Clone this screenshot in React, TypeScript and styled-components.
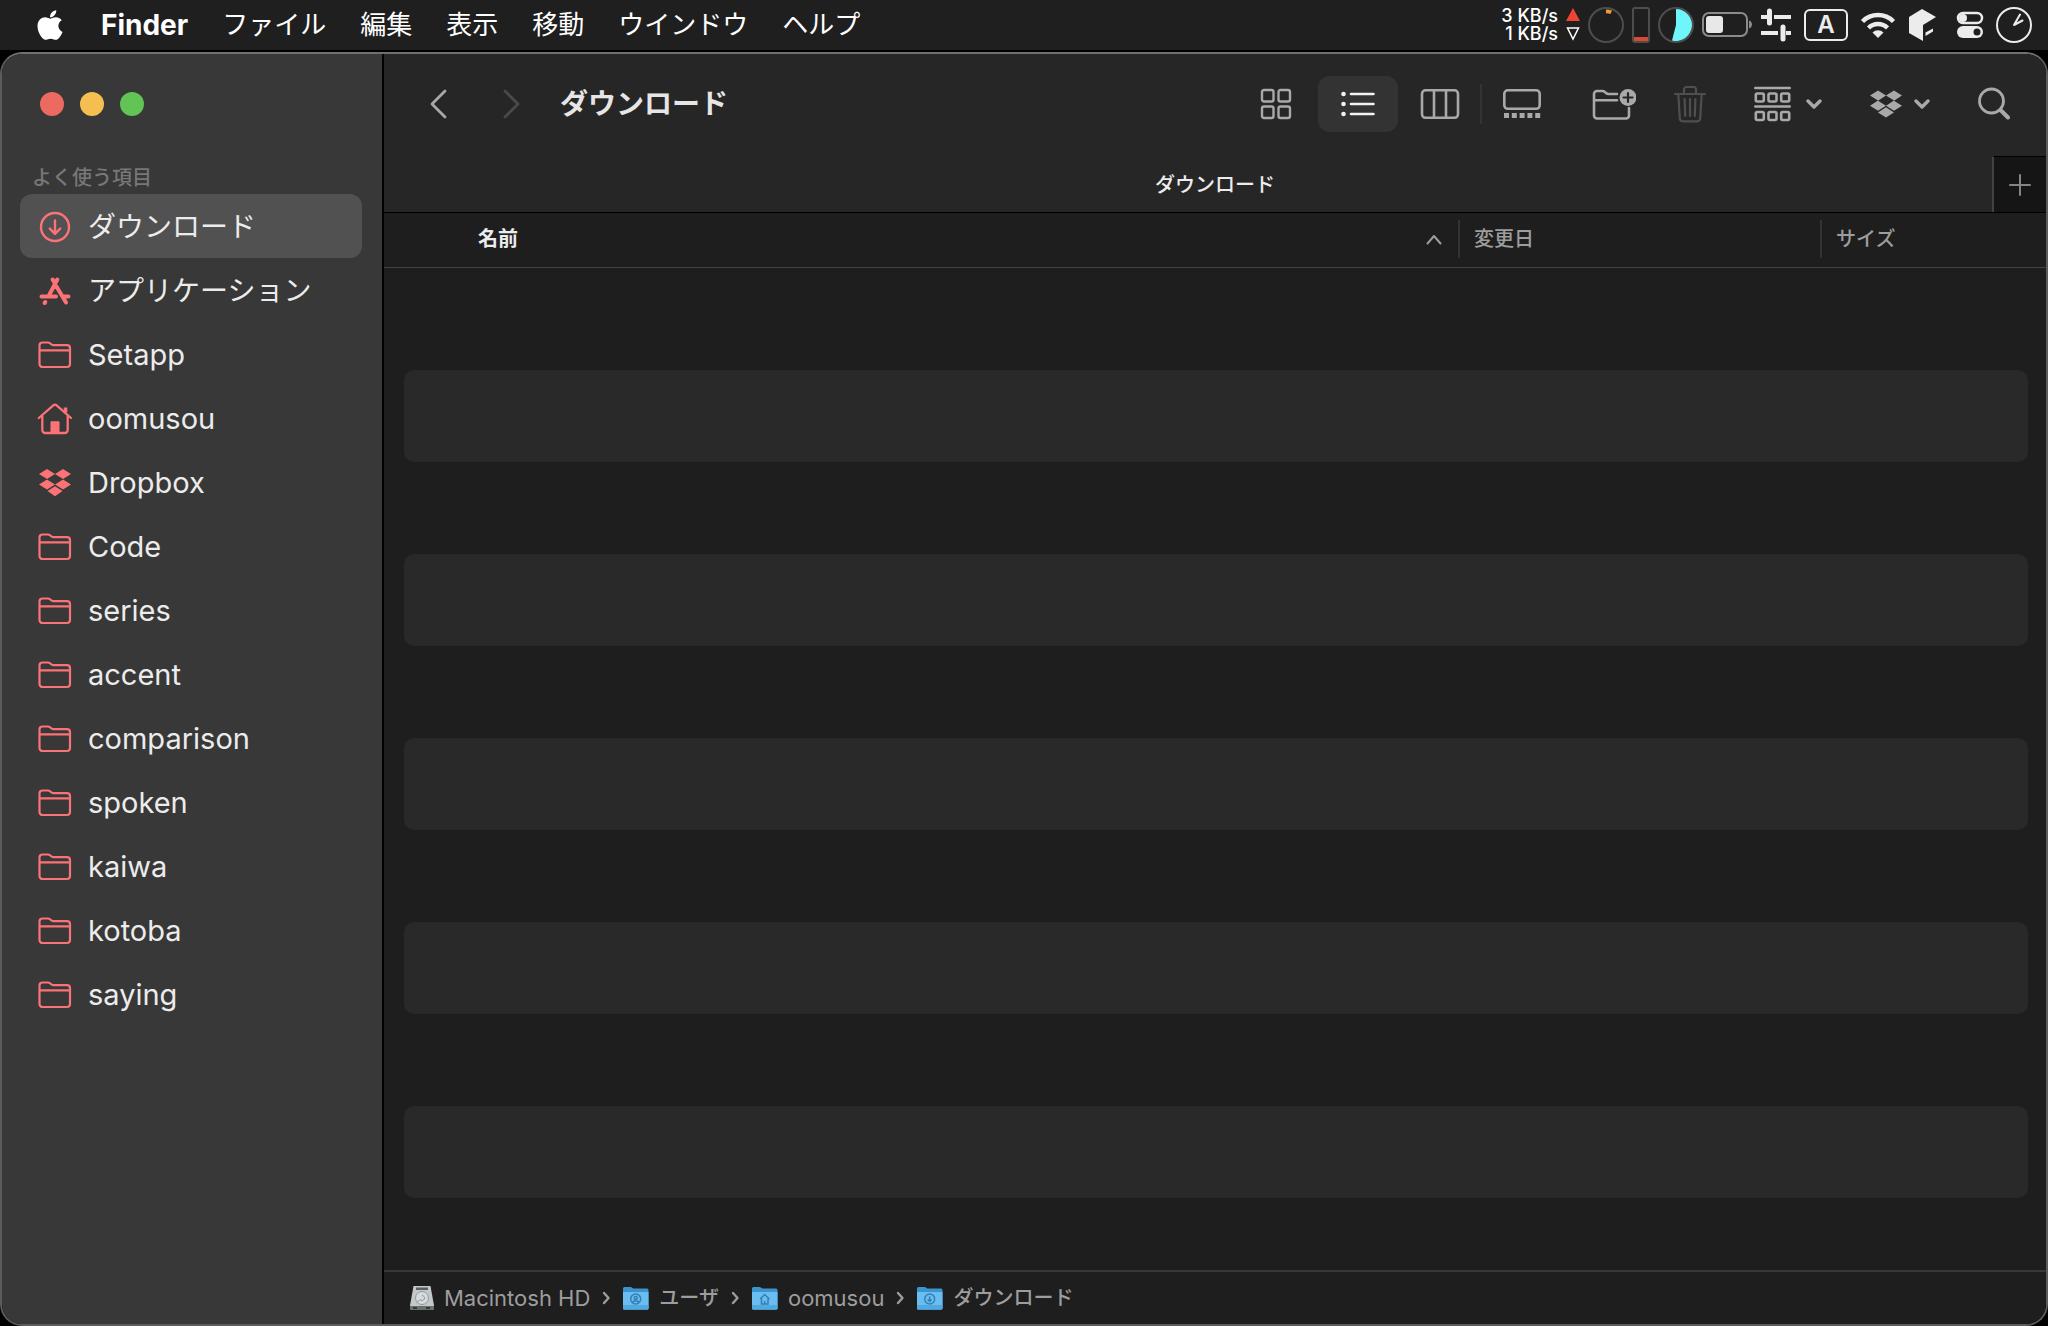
import React from 'react';
import styled, { createGlobalStyle } from 'styled-components';
import { FaApple, FaDropbox } from 'react-icons/fa';

const colors = {
  accent: '#fb7377',
  text: '#ececec',
  glyph: '#a9a9a9',
  dim: '#4a4a4a',
  muted: '#9d9d9d',
  sidebar: '#383838',
  chrome: '#262626',
  list: '#1e1e1e',
  stripe: '#292929',
  rule: '#424242',
};

const GlobalStyle = createGlobalStyle`
  *, *::before, *::after { box-sizing: border-box; }
  body {
    margin: 0;
    background: #000;
    color: ${colors.text};
    font-family: Inter, "Noto Sans CJK JP", sans-serif;
    overflow: hidden;
  }
  button {
    border: 0;
    padding: 0;
    background: none;
    color: inherit;
    font: inherit;
  }
  svg { display: block; flex: none; }
`;

const Desktop = styled.div`
  display: flex;
  flex-direction: column;
  gap: 2px;
  height: 100vh;
`;

const MenuBar = styled.header`
  display: flex;
  align-items: center;
  justify-content: space-between;
  flex: none;
  height: 50px;
  padding: 0 16px 0 33px;
  background: #1f1f1f;
  color: #fff;
`;

const Menus = styled.nav`
  display: flex;
  align-items: center;
  gap: 34px;
`;

const MenuButton = styled.button<{ $bold?: boolean }>`
  font-size: ${(p) => (p.$bold ? 28 : 26)}px;
  line-height: 36px;
  font-weight: ${(p) => (p.$bold ? 700 : 400)};
  white-space: nowrap;
`;

const Status = styled.div<{ $gap: number }>`
  display: flex;
  align-items: center;
  gap: ${(p) => p.$gap}px;
  color: ${colors.text};
`;

const NetSpeed = styled.div`
  font-size: 18px;
  line-height: 18px;
  font-weight: 500;
  text-align: right;
  white-space: nowrap;
  color: #fff;
`;

const InputSource = styled.button`
  width: 44px;
  height: 32px;
  border: 2px solid ${colors.text};
  border-radius: 6px;
  font-size: 24px;
  line-height: 28px;
  font-weight: 600;
  text-align: center;
`;

const Window = styled.main`
  display: flex;
  flex: 1;
  min-height: 0;
  border: 2px solid #5c5c5c;
  border-top-color: #707070;
  border-radius: 22px;
  overflow: hidden;
`;

const Sidebar = styled.aside`
  flex: none;
  width: 382px;
  padding: 38px 20px 0 18px;
  border-right: 2px solid #000;
  background: ${colors.sidebar};
`;

const Lights = styled.div`
  display: flex;
  gap: 16px;
  padding-left: 20px;
`;

const Light = styled.button<{ $color: string }>`
  width: 24px;
  height: 24px;
  border-radius: 50%;
  background: ${(p) => p.$color};
`;

const SectionTitle = styled.h2`
  margin: 48px 0 2px;
  padding-left: 12px;
  color: #777;
  font-size: 20px;
  line-height: 28px;
  font-weight: 500;
`;

const Places = styled.ul`
  margin: 0;
  padding: 0;
  list-style: none;
`;

const Place = styled.a<{ $active?: boolean; $latin?: boolean }>`
  display: flex;
  align-items: center;
  gap: 14px;
  height: 64px;
  padding: 2px 0 0 16px;
  border-radius: 12px;
  background: ${(p) => (p.$active ? '#515151' : 'transparent')};
  color: ${colors.text};
  font-size: ${(p) => (p.$latin ? 29 : 28)}px;
  line-height: 40px;
  text-decoration: none;
  svg { color: ${colors.accent}; }
`;

const Pane = styled.section`
  display: flex;
  flex-direction: column;
  flex: 1;
  min-width: 0;
  background: ${colors.list};
`;

const Toolbar = styled.div`
  display: flex;
  align-items: center;
  flex: none;
  height: 102px;
  padding: 0 24px 2px 30px;
  background: ${colors.chrome};
  color: ${colors.glyph};
`;

const History = styled.div`
  display: flex;
  gap: 26px;
`;

const NavButton = styled.button`
  display: grid;
  place-items: center;
  width: 48px;
  height: 56px;
  &:disabled { color: ${colors.dim}; }
`;

const Title = styled.h1`
  flex: 1;
  margin: 0;
  padding-left: 24px;
  color: #e6e6e6;
  font-size: 28px;
  line-height: 40px;
  font-weight: 700;
`;

const Views = styled.div`
  display: flex;
  align-items: center;
  gap: 2px;
  margin-right: 18px;
`;

const ViewButton = styled.button<{ $active?: boolean }>`
  display: grid;
  place-items: center;
  width: 80px;
  height: 56px;
  border-radius: 12px;
  background: ${(p) => (p.$active ? '#333' : 'transparent')};
  color: ${(p) => (p.$active ? '#f2f2f2' : 'inherit')};
`;

const Divider = styled.span`
  width: 2px;
  height: 40px;
  margin: 0 -2px;
  background: #333;
`;

const Actions = styled.div<{ $gap: number }>`
  display: flex;
  align-items: center;
  gap: ${(p) => p.$gap}px;
`;

const ToolButton = styled.button`
  display: flex;
  align-items: center;
  gap: 12px;
  height: 56px;
  padding: 0 12px;
  &:disabled { color: #4f4f4f; }
`;

const Tabs = styled.div`
  display: grid;
  grid-template-columns: 54px 1fr 54px;
  flex: none;
  height: 56px;
  background: ${colors.chrome};
`;

const Tab = styled.button`
  grid-column: 2;
  padding-top: 2px;
  font-size: 20px;
  line-height: 28px;
  font-weight: 500;
`;

const NewTab = styled.button`
  display: grid;
  place-items: center;
  border-top: 1px solid #000;
  border-left: 2px solid ${colors.rule};
  background: #151515;
  color: #858585;
`;

const FileTable = styled.table`
  display: flex;
  flex-direction: column;
  flex: 1;
  min-height: 0;
  overflow: hidden;
`;

const TableHead = styled.thead`
  display: block;
  flex: none;
  border-top: 1px solid #000;
  border-bottom: 1px solid ${colors.rule};
`;

const HeadRow = styled.tr`
  display: grid;
  grid-template-columns: 1fr 362px 226px;
  align-items: center;
  height: 54px;
  padding-bottom: 2px;
`;

const HeadCell = styled.th<{ $primary?: boolean }>`
  display: flex;
  align-items: center;
  justify-content: space-between;
  height: 38px;
  padding: ${(p) => (p.$primary ? '0 16px 0 94px' : '0 0 0 14px')};
  border-left: ${(p) => (p.$primary ? '0' : `2px solid #333`)};
  color: ${(p) => (p.$primary ? colors.text : colors.muted)};
  font-size: 20px;
  line-height: 28px;
  font-weight: ${(p) => (p.$primary ? 700 : 500)};
  svg { color: ${colors.muted}; }
`;

const TableBody = styled.tbody`
  display: block;
  padding: 10px 18px 0 20px;
`;

const FileRow = styled.tr`
  display: block;
  height: 92px;
  border-radius: 10px;
  &:nth-child(even) { background: ${colors.stripe}; }
`;

const PathBar = styled.nav`
  display: flex;
  align-items: center;
  flex: none;
  gap: 12px;
  height: 54px;
  padding-left: 26px;
  border-top: 2px solid #383838;
  color: ${colors.muted};
`;

const Crumb = styled.a<{ $latin?: boolean }>`
  display: flex;
  align-items: center;
  gap: 10px;
  color: inherit;
  font-size: ${(p) => (p.$latin ? 22 : 20)}px;
  line-height: 28px;
  font-weight: ${(p) => (p.$latin ? 400 : 500)};
  text-decoration: none;
`;

const isLatin = (name: string) => /^[\x20-\x7e]+$/.test(name);

const stroke = (width: number) => ({
  fill: 'none',
  stroke: 'currentColor',
  strokeWidth: width,
  strokeLinecap: 'round' as const,
  strokeLinejoin: 'round' as const,
});

const DownloadIcon = () => (
  <svg width="38" height="38" viewBox="0 0 38 38" {...stroke(2.4)}>
    <circle cx="19" cy="19" r="14" />
    <path d="M19 12.5v13M13.8 20.6l5.2 5.2 5.2-5.2" />
  </svg>
);

const AppsIcon = () => (
  <svg width="38" height="38" viewBox="0 0 38 38" {...stroke(4)}>
    <path d="M21.3 7.500L13.200 23M5.500 24.500H20M16.600 7.500l1.500 2.500M20.500 14.500l9.500 16M27.500 24.500h5M9.300 30l-.7 1" />
  </svg>
);

const FolderIcon = () => (
  <svg width="38" height="38" viewBox="0 0 38 38" {...stroke(2.2)}>
    <path d="M3.500 28V9.500a3 3 0 0 1 3-3h5.400c1.200 0 1.700.3 2.500 1l1 .8c.7.600 1.300.800 2.300.800H31a3 3 0 0 1 3 3V28a3 3 0 0 1-3 3H6.500a3 3 0 0 1-3-3zM3.500 14.300H34" />
  </svg>
);

const HomeIcon = () => (
  <svg width="38" height="38" viewBox="0 0 38 38" {...stroke(2.3)}>
    <path d="M2.800 18L17.300 5.300a2.500 2.500 0 0 1 3.300 0L35 18M6.300 16v14a3 3 0 0 0 3 3h19.400a3 3 0 0 0 3-3V16" />
    <path d="M29.500 7.500v5" strokeWidth="3.600" strokeLinecap="butt" />
    <path d="M14.500 33V22.300a1 1 0 0 1 1-1h7a1 1 0 0 1 1 1V33z" fill="currentColor" stroke="none" />
  </svg>
);

const DropboxIcon = () => (
  <svg width="38" height="38" viewBox="0 0 38 38" fill="currentColor">
    <path d="M11 5l8 5-8 5-8-5zM27 5l8 5-8 5-8-5zM11 15.600l8 5-8 5-8-5zM27 15.600l8 5-8 5-8-5zM11.500 27l7.500-4.700 7.500 4.700-7.500 5.200z" />
  </svg>
);

const Chevron = () => (
  <svg width="16" height="10" viewBox="0 0 16 10" {...stroke(3.4)}>
    <path d="M2 2l6 6 6-6" />
  </svg>
);

const PathArrow = () => (
  <svg width="9" height="14" viewBox="0 0 9 14" {...stroke(2.4)}>
    <path d="M2 2l4.500 5-4.500 5" />
  </svg>
);

const DiskIcon = () => (
  <svg width="24" height="26" viewBox="0 0 24 26">
    <path d="M3.500 1h17l3.500 19.500v2.500a2 2 0 0 1-2 2H2a2 2 0 0 1-2-2v-2.500z" fill="#c3c9c9" />
    <path d="M0 21h24v2a2 2 0 0 1-2 2H2a2 2 0 0 1-2-2z" fill="#66706c" />
    <path d="M6 2.500h12v2.500H6z" fill="#5a6063" />
    <circle cx="12" cy="13" r="6.500" fill="#d6dcdd" stroke="#929a9c" />
    <path d="M12 10.500a2.500 2.500 0 1 1-2 4l-3 3" fill="none" stroke="#8d9597" />
    <path d="M3 23h4M16 23h4" stroke="#313b37" strokeWidth="2" />
  </svg>
);

const BlueFolder = ({ kind }: { kind: 'users' | 'home' | 'downloads' }) => (
  <svg width="26" height="26" viewBox="0 0 26 26">
    <path d="M0 3.500A1.500 1.500 0 0 1 1.500 2h6c1.500 0 1.800 1.500 3.300 1.500H24a1.500 1.500 0 0 1 1.500 1.500v18A1.500 1.500 0 0 1 24 24.500H1.500A1.500 1.500 0 0 1 0 23z" fill="#3c94cf" />
    <path d="M0 7h25.500v16A1.500 1.500 0 0 1 24 24.500H1.500A1.500 1.500 0 0 1 0 23z" fill="#69bdf0" />
    <path d="M0 20h25.500v3A1.500 1.500 0 0 1 24 24.500H1.500A1.500 1.500 0 0 1 0 23z" fill="#51a9e2" />
    <g fill="none" stroke="#3480b3" strokeWidth="1.500">
      {kind === 'users' && <path d="M12.700 9a5 5 0 1 1 0 10 5 5 0 0 1 0-10zM12.700 11.500a1.500 1.500 0 1 1 0 3 1.500 1.500 0 0 1 0-3zM9.700 18c.5-3 5.500-3 6 0" />}
      {kind === 'home' && <path d="M8 14l4.700-4.500 4.700 4.500M9.500 13.500V19h6.500v-5.500M12.700 19v-3" />}
      {kind === 'downloads' && <path d="M12.700 9a5 5 0 1 1 0 10 5 5 0 0 1 0-10zM12.700 11.500v5M10.700 14.500l2 2 2-2" />}
    </g>
  </svg>
);

const places = [
  { name: 'ダウンロード', Icon: DownloadIcon },
  { name: 'アプリケーション', Icon: AppsIcon },
  { name: 'Setapp', Icon: FolderIcon },
  { name: 'oomusou', Icon: HomeIcon },
  { name: 'Dropbox', Icon: DropboxIcon },
  ...['Code', 'series', 'accent', 'comparison', 'spoken', 'kaiwa', 'kotoba', 'saying'].map((name) => ({
    name,
    Icon: FolderIcon,
  })),
];

const crumbs = [
  { name: 'Macintosh HD', icon: <DiskIcon /> },
  { name: 'ユーザ', icon: <BlueFolder kind="users" /> },
  { name: 'oomusou', icon: <BlueFolder kind="home" /> },
  { name: 'ダウンロード', icon: <BlueFolder kind="downloads" /> },
];

const StatusIcons = () => (
  <Status $gap={12}>
    <Status $gap={8}>
      <NetSpeed>
        <div>3 KB/s</div>
        <div>1 KB/s</div>
      </NetSpeed>
      <svg width="14" height="36" viewBox="0 0 14 36">
        <path d="M7 1l7 13H0z" fill="#ee4433" />
        <path d="M1.500 21h11L7 32z" fill="none" stroke="#fff" strokeWidth="1.500" />
      </svg>
      <svg width="36" height="36" viewBox="0 0 36 36">
        <circle cx="18" cy="18" r="17" fill="none" stroke="#4d4d4d" strokeWidth="2" />
        <path d="M18 2.500q3 0 6 1l-1.500 3.500q-2-.7-4.500-.7z" fill="#eb9a3e" />
      </svg>
      <svg width="18" height="36" viewBox="0 0 18 36">
        <rect x="1" y="1" width="16" height="34" rx="2" fill="none" stroke="#4d4d4d" strokeWidth="2" />
        <path d="M2 30h14v4H2z" fill="#d84a33" />
      </svg>
      <svg width="36" height="36" viewBox="0 0 36 36">
        <circle cx="18" cy="18" r="17" fill="none" stroke="#4d4d4d" strokeWidth="2" />
        <path d="M18 2a16 16 0 1 1-4 31.500L18 18z" fill="#6ff6fb" />
      </svg>
      <svg width="50" height="26" viewBox="0 0 50 26">
        <rect x="1" y="1" width="44" height="23" rx="6" fill="none" stroke="#8b8b8b" strokeWidth="2" />
        <path d="M47 8.500c4 1 4 7 0 8z" fill="#8b8b8b" />
        <rect x="4" y="4" width="17" height="17" rx="3" fill="#e8e8e8" />
      </svg>
      <svg width="32" height="36" viewBox="0 0 32 36" {...stroke(4)}>
        <path d="M1 10h8M14 10h17M1 26h17M26 26h5" strokeLinecap="butt" />
        <path d="M9.500 4v12M23 20v12" strokeWidth="5" />
      </svg>
    </Status>
    <InputSource aria-label="入力ソース">A</InputSource>
    <svg width="36" height="28" viewBox="0 0 36 28" fill="none" stroke="currentColor" strokeWidth="4.500">
      <path d="M2.500 10.500a22 22 0 0 1 31 0M8.500 17a13.500 13.500 0 0 1 19 0" />
      <path d="M18 27l-5.500-5.500a8 8 0 0 1 11 0z" fill="currentColor" stroke="none" />
    </svg>
    <svg width="36" height="34" viewBox="0 0 36 34" fill="currentColor">
      <path d="M14 1l14 8-13 8v16L1 25V9zM17.500 24.500l7.500-4v3l-7.500 4.500z" />
    </svg>
    <svg width="28" height="28" viewBox="0 0 28 28">
      <rect x="2" y="2" width="24" height="10" rx="5" fill="none" stroke="currentColor" strokeWidth="2.500" />
      <circle cx="7" cy="7" r="4" fill="currentColor" />
      <rect x="1" y="15" width="26" height="12" rx="6" fill="currentColor" />
      <circle cx="21" cy="21" r="3.500" fill="#1f1f1f" />
    </svg>
    <svg width="36" height="36" viewBox="0 0 36 36" {...stroke(2)}>
      <circle cx="18" cy="18" r="17" />
      <path d="M24 7.500L18 18l8.500-4.500" />
    </svg>
  </Status>
);

export default function App() {
  return (
    <>
      <GlobalStyle />
      <Desktop>
        <MenuBar>
          <Menus>
            <MenuButton aria-label="アップル">
              <FaApple size={34} />
            </MenuButton>
            <MenuButton $bold>Finder</MenuButton>
            {['ファイル', '編集', '表示', '移動', 'ウインドウ', 'ヘルプ'].map((name) => (
              <MenuButton key={name}>{name}</MenuButton>
            ))}
          </Menus>
          <StatusIcons />
        </MenuBar>
        <Window>
          <Sidebar>
            <Lights>
              <Light $color="#ec6a5f" aria-label="閉じる" />
              <Light $color="#f4bf50" aria-label="しまう" />
              <Light $color="#61c455" aria-label="拡大" />
            </Lights>
            <SectionTitle>よく使う項目</SectionTitle>
            <Places>
              {places.map(({ name, Icon }, i) => (
                <li key={name}>
                  <Place href="#" $active={i === 0} $latin={isLatin(name)}>
                    <Icon />
                    {name}
                  </Place>
                </li>
              ))}
            </Places>
          </Sidebar>
          <Pane>
            <Toolbar>
              <History>
                <NavButton aria-label="戻る">
                  <svg width="18" height="30" viewBox="0 0 18 30" {...stroke(2.8)}>
                    <path d="M16 2L3 15l13 13" />
                  </svg>
                </NavButton>
                <NavButton aria-label="進む" disabled>
                  <svg width="18" height="30" viewBox="0 0 18 30" {...stroke(2.8)}>
                    <path d="M2 2l13 13L2 28" />
                  </svg>
                </NavButton>
              </History>
              <Title>ダウンロード</Title>
              <Views>
                <ViewButton aria-label="アイコン">
                  <svg width="32" height="32" viewBox="0 0 32 32" {...stroke(2.4)}>
                    <rect x="2" y="2" width="11.500" height="11.500" rx="2" />
                    <rect x="18.500" y="2" width="11.500" height="11.500" rx="2" />
                    <rect x="2" y="18.500" width="11.500" height="11.500" rx="2" />
                    <rect x="18.500" y="18.500" width="11.500" height="11.500" rx="2" />
                  </svg>
                </ViewButton>
                <ViewButton aria-label="リスト" $active>
                  <svg width="34" height="26" viewBox="0 0 34 26" {...stroke(2.6)}>
                    <path d="M10 3h22.500M10 13h22.500M10 23h22.500" />
                    <path d="M2.500 3h.01M2.500 13h.01M2.500 23h.01" strokeWidth="4.600" />
                  </svg>
                </ViewButton>
                <ViewButton aria-label="カラム">
                  <svg width="40" height="32" viewBox="0 0 40 32" {...stroke(2.6)}>
                    <rect x="2" y="2.300" width="36" height="27.500" rx="3.500" />
                    <path d="M14 3v26M26 3v26" />
                  </svg>
                </ViewButton>
                <Divider />
                <ViewButton aria-label="ギャラリー">
                  <svg width="40" height="32" viewBox="0 0 40 32" {...stroke(2.6)}>
                    <rect x="2.300" y="2.300" width="35.400" height="18.500" rx="3.500" />
                    <path d="M2 27.500h37" strokeWidth="5" strokeLinecap="butt" strokeDasharray="5 2.800" />
                  </svg>
                </ViewButton>
              </Views>
              <Actions $gap={24}>
                <Actions $gap={14}>
                  <ToolButton aria-label="新規フォルダ">
                    <svg width="44" height="34" viewBox="0 0 44 34" {...stroke(2.6)}>
                      <path d="M25 7h-8.500c-1.200 0-1.700-.3-2.500-1l-1-.9C12.200 4.300 11.500 4 10.500 4H5a3 3 0 0 0-3 3v21.500a3 3 0 0 0 3 3h29a3 3 0 0 0 3-3V21M2 13.200h23" />
                      <circle cx="36" cy="10.500" r="8.500" fill="currentColor" stroke="none" />
                      <path d="M36 6v9M31.500 10.500h9" stroke={colors.chrome} strokeWidth="2.200" />
                    </svg>
                  </ToolButton>
                  <ToolButton aria-label="ゴミ箱に入れる" disabled>
                    <svg width="32" height="38" viewBox="0 0 32 38" {...stroke(2.2)}>
                      <path d="M1 9h30M10 8V4.500a2.500 2.500 0 0 1 2.500-2.500h7A2.500 2.500 0 0 1 22 4.500V8M4.300 9l1.500 24.500a3 3 0 0 0 3 2.800h14.400a3 3 0 0 0 3-2.800L27.700 9M10.600 14l.6 17M16 14v17M21.400 14l-.6 17" />
                    </svg>
                  </ToolButton>
                </Actions>
                <ToolButton aria-label="グループ分け">
                  <svg width="40" height="36" viewBox="0 0 40 36" {...stroke(2.6)}>
                    <path d="M1.300 2h34.400M1.300 20.500h34.400" />
                    {[7.5, 26].map((y) =>
                      [1.8, 14.5, 27.2].map((x) => (
                        <rect key={`${x}-${y}`} x={x} y={y} width="8" height="8" rx="1.500" />
                      )),
                    )}
                  </svg>
                  <Chevron />
                </ToolButton>
                <ToolButton aria-label="Dropbox">
                  <FaDropbox size={32} />
                  <Chevron />
                </ToolButton>
                <ToolButton aria-label="検索">
                  <svg width="32" height="34" viewBox="0 0 32 34" {...stroke(2.8)}>
                    <circle cx="13.500" cy="14" r="12" />
                    <path d="M22.500 23l7.500 7.500" strokeWidth="4" />
                  </svg>
                </ToolButton>
              </Actions>
            </Toolbar>
            <Tabs>
              <Tab>ダウンロード</Tab>
              <NewTab aria-label="新規タブ">
                <svg width="22" height="22" viewBox="0 0 22 22" {...stroke(2)}>
                  <path d="M11 1v20M1 11h20" />
                </svg>
              </NewTab>
            </Tabs>
            <FileTable>
              <TableHead>
                <HeadRow>
                  <HeadCell $primary>
                    名前
                    <svg width="16" height="12" viewBox="0 0 16 12" {...stroke(2)}>
                      <path d="M1.500 10.500L8 3l6.500 7.500" />
                    </svg>
                  </HeadCell>
                  <HeadCell>変更日</HeadCell>
                  <HeadCell>サイズ</HeadCell>
                </HeadRow>
              </TableHead>
              <TableBody>
                {Array.from({ length: 11 }, (_, i) => (
                  <FileRow key={i} />
                ))}
              </TableBody>
            </FileTable>
            <PathBar>
              {crumbs.map(({ name, icon }, i) => (
                <React.Fragment key={name}>
                  {i > 0 && <PathArrow />}
                  <Crumb href="#" $latin={isLatin(name)}>
                    {icon}
                    {name}
                  </Crumb>
                </React.Fragment>
              ))}
            </PathBar>
          </Pane>
        </Window>
      </Desktop>
    </>
  );
}
